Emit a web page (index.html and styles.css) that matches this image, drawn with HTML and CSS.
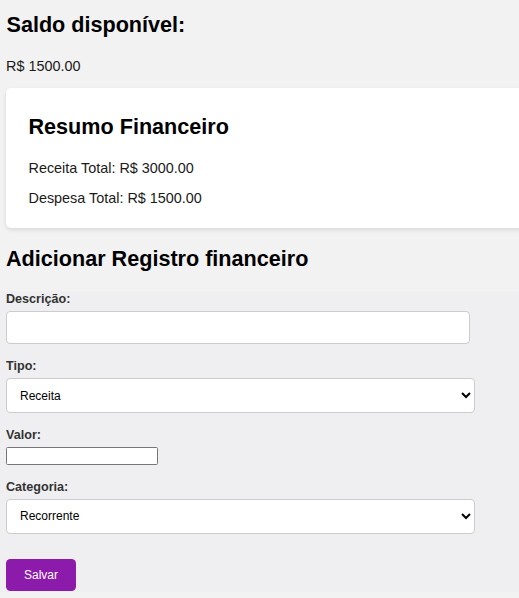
FILE: index.html
```html
<!DOCTYPE html>
<html lang="pt-BR">
<head>
<meta charset="utf-8">
<title>Controle Financeiro</title>
<link rel="stylesheet" href="styles.css">
</head>
<body>
  <h2 class="balance-title">Saldo disponível:</h2>
  <p class="balance">R$ 1500.00</p>

  <div class="card">
    <h2 class="card-title">Resumo Financeiro</h2>
    <p class="card-line">Receita Total: R$ 3000.00</p>
    <p class="card-line">Despesa Total: R$ 1500.00</p>
  </div>

  <h2 class="section-title">Adicionar Registro financeiro</h2>

  <form class="form">
    <div class="field">
      <label class="label" for="descricao">Descrição:</label>
      <input class="text-input" id="descricao" type="text">
    </div>
    <div class="field">
      <label class="label" for="tipo">Tipo:</label>
      <select class="select" id="tipo">
        <option>Receita</option>
        <option>Despesa</option>
      </select>
    </div>
    <div class="field">
      <label class="label" for="valor">Valor:</label>
      <input class="plain-input" id="valor" type="text">
    </div>
    <div class="field">
      <label class="label" for="categoria">Categoria:</label>
      <select class="select" id="categoria">
        <option>Recorrente</option>
        <option>Eventual</option>
      </select>
    </div>
    <button class="button" type="button">Salvar</button>
  </form>
</body>
</html>
```

FILE: styles.css
```css
html {
  margin: 0;
  background: #f2f2f2;
  overflow: hidden;
}

body {
  margin: 0;
  padding: 0 6px;
  background: #f2f2f2;
  font-family: "Liberation Sans", Arial, sans-serif;
  font-size: 14.4px;
  color: #1a1a1a;
  overflow: hidden;
}

.balance-title,
.card-title,
.section-title {
  font-size: 21.6px;
  font-weight: bold;
  color: #000;
  line-height: normal;
}

.balance-title {
  margin: 12px 0 19.5px;
  padding-left: 0.5px;
}

.balance {
  margin: 0 0 14px;
  line-height: normal;
}

.card {
  width: 600px;
  background: #fff;
  border-radius: 5px;
  box-shadow: 0 2px 4px rgba(0, 0, 0, 0.1);
  padding: 8px 22.5px;
}

.card-title {
  margin: 18px 0 20px;
}

.card-line {
  margin: 14.4px 0;
  line-height: normal;
}

.section-title {
  margin: 17.5px 0 19px;
}

.form {
  margin: 0 -6px;
  padding: 1.5px 6px 1.5px;
  background: #efeff1;
}

.field {
  margin-bottom: 15px;
}

.label {
  display: block;
  font-size: 12.6px;
  font-weight: bold;
  color: #333;
  line-height: normal;
  margin-bottom: 5px;
}

.text-input {
  display: block;
  box-sizing: border-box;
  width: 464px;
  height: 33px;
  margin: 0;
  padding: 0 9px;
  border: 1px solid #ccc;
  border-radius: 4px;
  background: #fff;
  font-family: "Liberation Sans", Arial, sans-serif;
  font-size: 12px;
}

.select {
  display: block;
  box-sizing: border-box;
  width: 469px;
  height: 35px;
  margin: 0;
  padding: 0 9px;
  border: 1px solid #ccc;
  border-radius: 4px;
  background: #fff;
  color: #000;
  font-family: "Liberation Sans", Arial, sans-serif;
  font-size: 12px;
}

.plain-input {
  display: block;
  box-sizing: border-box;
  width: 152px;
  height: 17.5px;
  margin: 0;
  padding: 0 2px;
  border: 1px solid #767676;
  border-radius: 1.5px;
  background: #fff;
  font-family: "Liberation Sans", Arial, sans-serif;
  font-size: 12px;
}

.button {
  display: block;
  box-sizing: border-box;
  width: 70px;
  height: 31.7px;
  margin: 25.5px 0 0;
  padding: 0;
  border: none;
  border-radius: 4.5px;
  background: #8c1aab;
  color: #fff;
  font-family: "Liberation Sans", Arial, sans-serif;
  font-size: 12px;
}
```
